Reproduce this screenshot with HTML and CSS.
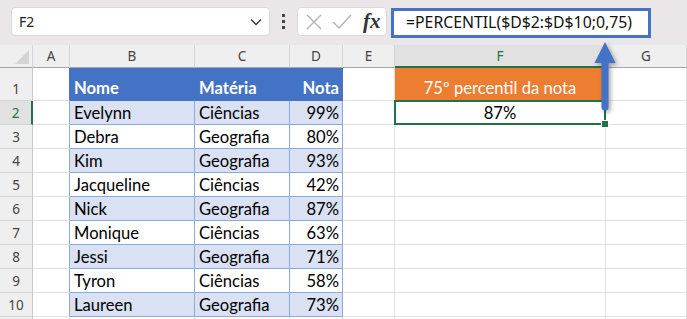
FILE: index.html
```html
<!DOCTYPE html>
<html lang="pt">
<head>
  <meta charset="UTF-8">
  <title>Percentil</title>
  <link rel="stylesheet" href="styles.css">
</head>
<body>
  <div class="app">
    <div class="toolbar">
      <div class="namebox">
        <span>F2</span>
        <svg class="chevron" width="12" height="8" viewBox="0 0 12 8"><path d="M1 1.5 L6 6.5 L11 1.5" fill="none" stroke="#333" stroke-width="1.3"/></svg>
      </div>
      <div class="dots"><i></i><i></i><i></i></div>
      <div class="fxbox">
        <svg width="16" height="16" viewBox="0 0 16 16"><path d="M1 1 L15 15 M15 1 L1 15" stroke="#b3b3b3" stroke-width="1.4"/></svg>
        <svg width="20" height="16" viewBox="0 0 20 16"><path d="M1 8 L7 14 L19 1" fill="none" stroke="#b3b3b3" stroke-width="1.4"/></svg>
        <span class="fx">fx</span>
      </div>
      <div class="formula">=PERCENTIL($D$2:$D$10;0,75)</div>
    </div>

    <div class="sheet">
      <div class="hd corner"></div><div class="hd">A</div><div class="hd">B</div><div class="hd">C</div><div class="hd">D</div><div class="hd">E</div><div class="hd sel">F</div><div class="hd">G</div>

      <div class="rh tall">1</div><div class="c edge-h"></div><div class="c th">Nome</div><div class="c th">Matéria</div><div class="c th num">Nota</div><div class="c"></div><div class="c title">75º percentil da nota</div><div class="c"></div>

      <div class="rh sel">2</div><div class="c edge"></div><div class="c td band">Evelynn</div><div class="c td band">Ciências</div><div class="c td band num">99%</div><div class="c"></div><div class="c active">87%</div><div class="c"></div>
      <div class="rh">3</div><div class="c edge"></div><div class="c td">Debra</div><div class="c td">Geografia</div><div class="c td num">80%</div><div class="c"></div><div class="c"></div><div class="c"></div>
      <div class="rh">4</div><div class="c edge"></div><div class="c td band">Kim</div><div class="c td band">Geografia</div><div class="c td band num">93%</div><div class="c"></div><div class="c"></div><div class="c"></div>
      <div class="rh">5</div><div class="c edge"></div><div class="c td">Jacqueline</div><div class="c td">Ciências</div><div class="c td num">42%</div><div class="c"></div><div class="c"></div><div class="c"></div>
      <div class="rh">6</div><div class="c edge"></div><div class="c td band">Nick</div><div class="c td band">Geografia</div><div class="c td band num">87%</div><div class="c"></div><div class="c"></div><div class="c"></div>
      <div class="rh">7</div><div class="c edge"></div><div class="c td">Monique</div><div class="c td">Ciências</div><div class="c td num">63%</div><div class="c"></div><div class="c"></div><div class="c"></div>
      <div class="rh">8</div><div class="c edge"></div><div class="c td band">Jessi</div><div class="c td band">Geografia</div><div class="c td band num">71%</div><div class="c"></div><div class="c"></div><div class="c"></div>
      <div class="rh">9</div><div class="c edge"></div><div class="c td">Tyron</div><div class="c td">Ciências</div><div class="c td num">58%</div><div class="c"></div><div class="c"></div><div class="c"></div>
      <div class="rh">10</div><div class="c edge"></div><div class="c td band">Laureen</div><div class="c td band">Geografia</div><div class="c td band num">73%</div><div class="c"></div><div class="c"></div><div class="c"></div>
      <div class="rh"></div><div class="c"></div><div class="c"></div><div class="c"></div><div class="c"></div><div class="c"></div><div class="c"></div><div class="c"></div>
    </div>

    <svg class="arrow" width="32" height="76" viewBox="0 0 32 76">
      <path d="M15 3 L25.5 24 L18.5 24 L18.5 68 A3.5 3.5 0 0 1 11.5 68 L11.5 24 L4.5 24 Z" fill="#4472c4"/>
    </svg>
  </div>
</body>
</html>
```

FILE: styles.css
```css
* {
  margin: 0;
  padding: 0;
  box-sizing: border-box;
}
html, body {
  width: 100%;
  height: 100%;
  overflow: hidden;
  background: #fff;
}
.app {
  position: relative;
  width: 687px;
  height: 319px;
  overflow: hidden;
}

/* formula bar */
.toolbar {
  height: 45px;
  background: #ebe7e9;
  display: flex;
  align-items: flex-start;
  padding: 7px 0 0 11px;
}
.namebox {
  width: 259px;
  height: 29px;
  background: #fff;
  border: 1px solid #dcd8da;
  border-radius: 4px;
  display: flex;
  align-items: center;
  justify-content: space-between;
  padding: 0 7px 0 7px;
  font-family: "Noto Sans", sans-serif;
  font-size: 14px;
  color: #222;
}
.dots {
  width: 27px;
  height: 29px;
  display: flex;
  flex-direction: column;
  align-items: center;
  justify-content: center;
  gap: 3px;
}
.dots i {
  width: 3px;
  height: 3px;
  background: #444;
}
.fxbox {
  width: 90px;
  height: 29px;
  background: #fff;
  border: 1px solid #dcd8da;
  border-radius: 4px;
  display: flex;
  align-items: center;
  padding-left: 8px;
  gap: 10px;
}
.fx {
  font-family: "Liberation Serif", serif;
  font-style: italic;
  font-weight: bold;
  font-size: 21px;
  color: #333;
  margin-left: 1px;
  line-height: 1;
}
.formula {
  margin-left: 4px;
  margin-top: 1px;
  width: 260px;
  height: 30px;
  background: #fff;
  border: 3px solid #4472c4;
  font-family: "Noto Sans", sans-serif;
  font-size: 15.8px;
  color: #111;
  padding-left: 12px;
  line-height: 23px;
  white-space: nowrap;
}

/* grid */
.sheet {
  display: grid;
  grid-template-columns: 33px 37px 125px 95px 53px 52px 211px 81px;
  grid-template-rows: 23px 33px repeat(10, 24px);
  font-family: "Lato", sans-serif;
  font-size: 16.6px;
  color: #000;
}
.hd {
  background: #efefef;
  border-right: 1px solid #d5d5d5;
  border-bottom: 1px solid #a6a6a6;
  font-family: "Noto Sans", sans-serif;
  font-size: 13.5px;
  color: #444;
  display: flex;
  align-items: center;
  justify-content: center;
}
.hd.sel {
  background: #e1e1e1;
  color: #217346;
  border-bottom: 2px solid #217346;
}
.corner {
  position: relative;
}
.corner::after {
  content: "";
  position: absolute;
  right: 3px;
  bottom: 3px;
  border-left: 14px solid transparent;
  border-bottom: 14px solid #d4d4d4;
}
.rh {
  background: #efefef;
  border-right: 1px solid #c8c8c8;
  border-bottom: 1px solid #d5d5d5;
  font-family: "Noto Sans", sans-serif;
  font-size: 13.5px;
  color: #444;
  display: flex;
  align-items: center;
  justify-content: center;
}
.rh.tall {
  align-items: flex-end;
  padding-bottom: 2px;
}
.rh.sel {
  background: #e1e1e1;
  color: #217346;
  border-right: 2px solid #217346;
}
.c {
  border-right: 1px solid #e1e1e1;
  border-bottom: 1px solid #e1e1e1;
  display: flex;
  align-items: flex-end;
  padding: 0 4px 0;
  line-height: 22px;
  white-space: nowrap;
}
.edge {
  border-right-color: #8ea9db;
}
.edge-h {
  border-right-color: #4472c4;
}
.th {
  background: #4472c4;
  border-color: #4472c4;
  color: #fff;
  font-weight: bold;
  padding-bottom: 1px;
}
.td {
  border-right-color: #8ea9db;
  border-bottom-color: #8ea9db;
}
.band {
  background: #d9e1f2;
}
.num {
  justify-content: flex-end;
  padding-right: 3px;
}
.title {
  background: #ed7d31;
  border-color: #ed7d31;
  color: #fff;
  justify-content: center;
  padding-bottom: 1px;
}
.active {
  position: relative;
  justify-content: center;
}
.active::before {
  content: "";
  position: absolute;
  left: -1px;
  top: -1px;
  right: -1px;
  bottom: -1px;
  border: 2px solid #217346;
}
.active::after {
  content: "";
  position: absolute;
  right: -4px;
  bottom: -4px;
  width: 6px;
  height: 6px;
  background: #217346;
  border: 1px solid #fff;
}

.arrow {
  position: absolute;
  left: 590px;
  top: 39px;
  filter: drop-shadow(2px 2px 2px rgba(0, 0, 0, 0.35));
}
```
